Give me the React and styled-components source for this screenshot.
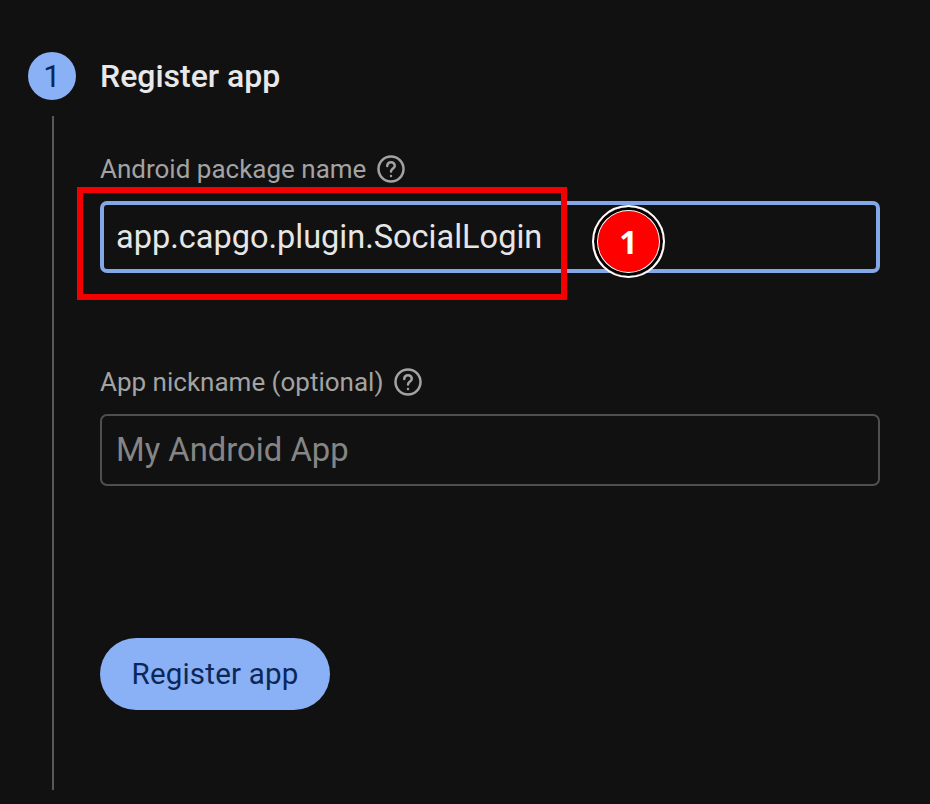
import React from "react";
import styled, { createGlobalStyle } from "styled-components";

const Global = createGlobalStyle`
  html, body { margin: 0; padding: 0; background: #111111; }
  * { box-sizing: border-box; }
`;

const Page = styled.div`
  position: relative;
  width: 930px;
  height: 804px;
  overflow: hidden;
  background: #111111;
  font-family: Roboto, "Liberation Sans", sans-serif;
  padding: 52px 50px 14px 28px;
  display: grid;
  grid-template-columns: 48px 1fr;
  grid-template-rows: 48px 1fr;
  column-gap: 24px;
`;

const StepCircle = styled.div`
  width: 48px;
  height: 48px;
  border-radius: 50%;
  background: #8ab0f5;
  color: #0b2859;
  font-size: 31px;
  font-weight: 400;
  display: flex;
  align-items: center;
  justify-content: center;
`;

const StepTitle = styled.h2`
  margin: 0;
  font-size: 32px;
  font-weight: 500;
  color: #e8e8e8;
  line-height: 48px;
`;

const Rail = styled.div`
  display: flex;
  justify-content: center;
  padding: 16px 0 0 2px;
`;

const RailLine = styled.div`
  width: 2px;
  height: 100%;
  background: #585858;
`;

const Body = styled.div`
  padding-top: 54px;
  display: flex;
  flex-direction: column;
`;

const Field = styled.div`
  display: flex;
  flex-direction: column;
  margin-bottom: ${(p) => p.$gap}px;
`;

const Label = styled.label`
  display: flex;
  align-items: center;
  gap: 10px;
  height: 30px;
  margin-bottom: 17px;
  font-size: 26px;
  color: #a3a3a3;
`;

const Help = styled.svg`
  width: 30px;
  height: 30px;
  flex: none;
`;

const Input = styled.div`
  height: 72px;
  border-radius: 7px;
  border: ${(p) => (p.$focused ? "4px solid #82a8e8" : "2px solid #4f4f4f")};
  padding-left: ${(p) => (p.$focused ? 12 : 14)}px;
  display: flex;
  align-items: center;
  font-size: ${(p) => (p.$focused ? 32.5 : 32.8)}px;
  color: ${(p) => (p.$focused ? "#e6e6e6" : "#858585")};
  white-space: nowrap;
`;

const Button = styled.button`
  width: 230px;
  height: 72px;
  border: none;
  border-radius: 36px;
  background: #8ab0f5;
  color: #0b2859;
  font-family: inherit;
  font-size: 29.5px;
  font-weight: 450;
  letter-spacing: 0.2px;
  padding: 0;
`;

const Highlight = styled.div`
  position: absolute;
  left: 77px;
  top: 187px;
  width: 490px;
  height: 113px;
  border: 6px solid #f40000;
`;

const Badge = styled.div`
  position: absolute;
  left: 592px;
  top: 205px;
  width: 73px;
  height: 73px;
  border-radius: 50%;
  background: #fe0000;
  border: 2px solid #fff;
  box-shadow: inset 0 0 0 3px #000, inset 0 0 0 4px #fff;
  color: #fff;
  font-family: "Open Sans", "Liberation Sans", sans-serif;
  font-weight: 700;
  font-size: 32px;
  display: flex;
  align-items: center;
  justify-content: center;
`;

const HelpIcon = () => (
  <Help viewBox="0 0 24 24" fill="none" stroke="#a3a3a3" strokeWidth="2" strokeLinecap="round">
    <circle cx="12" cy="12" r="10" />
    <path d="M9 9.5a3 3 0 0 1 6 0c0 2-3 2.3-3 4.5" />
    <circle cx="12" cy="17.5" r="0.4" fill="#a3a3a3" strokeWidth="1.2" />
  </Help>
);

export default function App() {
  return (
    <>
      <Global />
      <Page>
        <StepCircle>1</StepCircle>
        <StepTitle>Register app</StepTitle>
        <Rail>
          <RailLine />
        </Rail>
        <Body>
          <Field $gap={94}>
            <Label>
              Android package name <HelpIcon />
            </Label>
            <Input $focused>app.capgo.plugin.SocialLogin</Input>
          </Field>
          <Field $gap={152}>
            <Label>
              App nickname (optional) <HelpIcon />
            </Label>
            <Input>My Android App</Input>
          </Field>
          <Button>Register app</Button>
        </Body>
        <Highlight />
        <Badge>1</Badge>
      </Page>
    </>
  );
}
